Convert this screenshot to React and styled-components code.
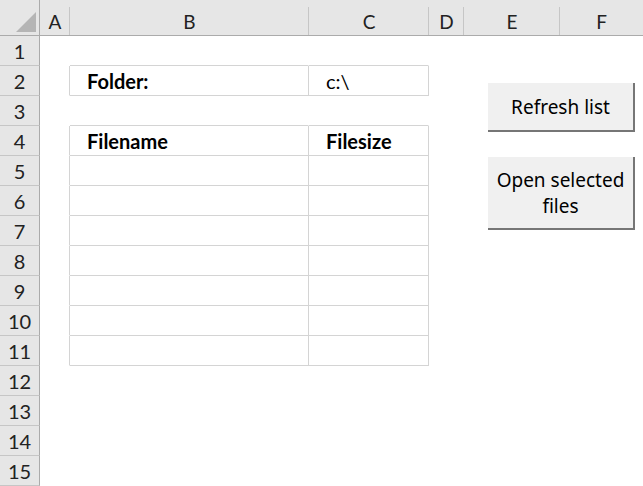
import React from 'react';
import styled, { createGlobalStyle } from 'styled-components';

const GlobalStyle = createGlobalStyle`
  html, body {
    margin: 0;
    padding: 0;
    background: #ffffff;
  }
  body {
    font-family: Lato, "Liberation Sans", sans-serif;
    overflow: hidden;
  }
`;

const COLUMNS = ['A', 'B', 'C', 'D', 'E', 'F'];
const ROW_COUNT = 15;
const CELL_BORDER = '#d4d4d4';

const Sheet = styled.div`
  position: relative;
  display: grid;
  grid-template-columns: 40px 30px 239px 120px 35px 96px 1fr;
  grid-template-rows: 36px repeat(${ROW_COUNT}, 30px);
  width: 643px;
  height: 486px;
  overflow: hidden;
  background: #ffffff;
`;

const Corner = styled.div`
  display: flex;
  align-items: flex-end;
  justify-content: flex-end;
  padding: 0 3px 3px 0;
  background: #e6e6e6;
  border-right: 1px solid #ababab;
  border-bottom: 1px solid #ababab;
`;

const ColumnHeader = styled.div`
  position: relative;
  display: flex;
  align-items: center;
  justify-content: center;
  padding-top: 7px;
  background: #e6e6e6;
  border-bottom: 1px solid #ababab;
  color: #222222;
  font-family: Lato, "Liberation Sans", sans-serif;
  font-size: 19px;

  &::after {
    content: '';
    position: absolute;
    top: 7px;
    right: 0;
    bottom: 0;
    width: 1px;
    background: ${({ $last }) => ($last ? 'transparent' : '#c6c6c6')};
  }
`;

const RowHeader = styled.div`
  display: flex;
  align-items: center;
  justify-content: center;
  background: #e6e6e6;
  border-right: 1px solid #ababab;
  border-bottom: 1px solid #c6c6c6;
  color: #222222;
  font-size: 20px;
`;

const Cell = styled.div`
  display: flex;
  align-items: center;
  padding-left: 17px;
  box-sizing: border-box;
  border-right: 1px solid ${({ $right }) => ($right ? CELL_BORDER : 'transparent')};
  border-bottom: 1px solid ${({ $bottom }) => ($bottom ? CELL_BORDER : 'transparent')};
  font-size: 20px;
  font-weight: ${({ $bold }) => ($bold ? 700 : 400)};
  color: #000000;
  white-space: nowrap;
`;

const SheetButton = styled.button`
  position: absolute;
  left: 488px;
  top: ${({ $top }) => $top}px;
  width: 147px;
  height: ${({ $height }) => $height}px;
  padding: 0 4px;
  box-sizing: border-box;
  background: #f0f0f0;
  border: none;
  border-right: 2px solid #767676;
  border-bottom: 2px solid #767676;
  color: #000000;
  font-family: "Noto Sans", "Open Sans", sans-serif;
  font-size: 19px;
  line-height: 26px;
  text-align: center;
  white-space: nowrap;
  cursor: pointer;
`;

const CornerTriangle = () => (
  <svg width="20" height="20" viewBox="0 0 20 20">
    <polygon points="20,0 20,20 0,20" fill="#b5b5b5" />
  </svg>
);

// which cells carry a visible border, row/col are 1-based sheet coords
const TABLE_ROWS = [2, 4, 5, 6, 7, 8, 9, 10, 11];
const inTable = (row, col) => TABLE_ROWS.includes(row) && (col === 2 || col === 3);

const CONTENT = {
  '2-2': { text: 'Folder:', bold: true },
  '2-3': { text: 'c:\\' },
  '4-2': { text: 'Filename', bold: true },
  '4-3': { text: 'Filesize', bold: true },
};

const App = () => {
  const rows = Array.from({ length: ROW_COUNT }, (_, i) => i + 1);

  return (
    <>
      <GlobalStyle />
      <Sheet>
        <Corner>
          <CornerTriangle />
        </Corner>
        {COLUMNS.map((col, i) => (
          <ColumnHeader key={col} $last={i === COLUMNS.length - 1}>
            {col}
          </ColumnHeader>
        ))}
        {rows.map((row) => (
          <React.Fragment key={row}>
            <RowHeader>{row}</RowHeader>
            {COLUMNS.map((_, i) => {
              const col = i + 1;
              const content = CONTENT[`${row}-${col}`];
              const right = inTable(row, col) || inTable(row, col + 1);
              const bottom = inTable(row, col) || inTable(row + 1, col);
              return (
                <Cell key={col} $right={right} $bottom={bottom} $bold={content?.bold}>
                  {content?.text}
                </Cell>
              );
            })}
          </React.Fragment>
        ))}
        <SheetButton $top={83} $height={49}>
          Refresh list
        </SheetButton>
        <SheetButton $top={157} $height={73}>
          Open selected
          <br />
          files
        </SheetButton>
      </Sheet>
    </>
  );
};

export default App;
